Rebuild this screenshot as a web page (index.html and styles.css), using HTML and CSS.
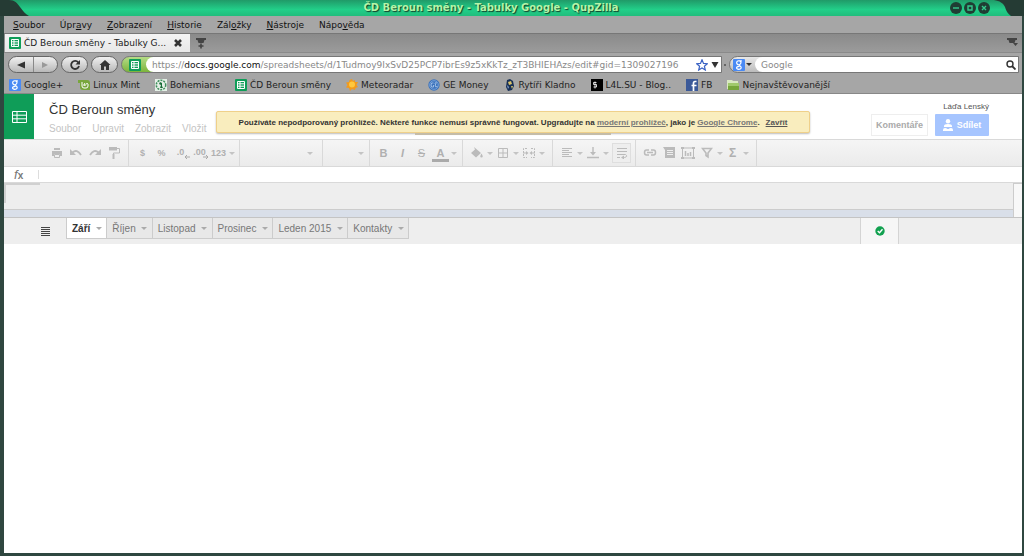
FILE: index.html
```html
<!DOCTYPE html>
<html lang="cs">
<head>
<meta charset="utf-8">
<title>ČD Beroun směny - Tabulky Google - QupZilla</title>
<link rel="stylesheet" href="styles.css">
</head>
<body>
<svg class="defs" width="0" height="0" aria-hidden="true">
  <symbol id="sheet" viewBox="0 0 12 12"><rect width="12" height="12" rx="1" fill="#0f9d58"/><path d="M2.5 2.5h7v7h-7zM2.5 4.8h7M2.5 7.2h7M5 2.5v7" fill="none" stroke="#fff"/></symbol>
  <symbol id="g8" viewBox="0 0 12 12"><rect width="12" height="12" rx="1" fill="#4a8af4"/><path d="M8.8 1.8H6a2 2 0 1 0 .8 3.6M7 2c1.600 1 1 2.600 0 3.300-1.200.8-.6 1.300.4 1.900 1.600 1.200.6 3.100-1.500 3.100-3.300 0-3.200-2.800.6-3" fill="none" stroke="#fff" stroke-width="1.200"/></symbol>
</svg>
<div class="window">
  <header class="titlebar">
    <h1>ČD Beroun směny - Tabulky Google - QupZilla</h1>
    <div class="winbtns">
      <button aria-label="Minimalizovat"><svg viewBox="0 0 12 12"><circle cx="6" cy="6" r="6"/><path d="M3 6h6"/></svg></button>
      <button aria-label="Maximalizovat"><svg viewBox="0 0 12 12"><circle cx="6" cy="6" r="6"/><path d="M4 4h4v4H4z"/></svg></button>
      <button aria-label="Zavřít okno"><svg viewBox="0 0 12 12"><circle cx="6" cy="6" r="6"/><path d="M4 4l4 4M8 4l-4 4"/></svg></button>
    </div>
    <svg class="corner left" viewBox="0 0 30 16"><path d="M0 0h9c6 0 8 3 11 7 3 4 5 7 9 9H0z"/></svg>
    <svg class="corner right" viewBox="0 0 30 16"><path d="M30 0H0c6 1 9 3 11 7 1 4 3 7 6 9h13z"/></svg>
  </header>
  <div class="chrome">
    <nav class="menubar">
      <button><u>S</u>oubor</button><button>Úpr<u>a</u>vy</button><button><u>Z</u>obrazení</button><button><u>H</u>istorie</button><button>Zál<u>o</u>žky</button><button><u>N</u>ástroje</button><button>Nápo<u>v</u>ěda</button>
    </nav>
    <div class="tabbar">
      <div class="tab"><svg class="fav"><use href="#sheet"/></svg><span>ČD Beroun směny - Tabulky G...</span><button aria-label="Zavřít panel"><svg viewBox="0 0 10 10"><path d="M2 2l6 6M8 2l-6 6" stroke="#333" stroke-width="2.600"/></svg></button></div>
      <button class="newtab" aria-label="Nový panel"><svg viewBox="0 0 12 12"><path d="M1 1h10v2H9.500l-1 3h-5l-1-3H1z" fill="#444"/><path d="M3.500 9h5M6 6.500v5" stroke="#444" stroke-width="1.600"/></svg></button>
      <button class="tablist" aria-label="Seznam panelů"><svg viewBox="0 0 12 12"><path d="M1 1h10v2H9.500l-1 3h-5l-1-3H1zM7 6h5L9.500 9z" fill="#444"/></svg></button>
    </div>
    <div class="navbar">
      <div class="pair"><button aria-label="Zpět"><svg viewBox="0 0 10 10"><path d="M9 1.500v7L1 5z" fill="#333"/></svg></button><button aria-label="Vpřed"><svg viewBox="0 0 10 10"><path d="M2 2v6l6-3z" fill="#999"/></svg></button></div>
      <button class="pill" aria-label="Obnovit"><svg viewBox="0 0 12 12"><path d="M9.300 3.500A4 4 0 1 0 10 7" fill="none" stroke="#333" stroke-width="1.800"/><path d="M11 1v4.500H6.500z" fill="#333"/></svg></button>
      <button class="pill" aria-label="Domů"><svg viewBox="0 0 12 12"><path d="M6 1l5.500 5H10v5H7V7.500H5V11H2V6H.5z" fill="#333"/></svg></button>
      <div class="urlbar">
        <div class="site"><svg class="fav"><use href="#sheet"/></svg></div>
        <div class="address" role="textbox" aria-label="Adresa" contenteditable="true" spellcheck="false">https://<b>docs.google.com</b>/spreadsheets/d/1Tudmoy9IxSvD25PCP7ibrEs9z5xKkTz_zT3BHIEHAzs/edit#gid=1309027196</div>
        <button class="star" aria-label="Záložka"><svg viewBox="0 0 12 12"><path d="M6 .8l1.500 3.600 3.800.3-2.900 2.500.9 3.800L6 9l-3.300 2 .9-3.800L.7 4.700l3.800-.3z" fill="#fff" stroke="#3a62c4" stroke-width="1.200"/></svg></button>
        <button class="drop" aria-label="Historie adres"><svg viewBox="0 0 8 8"><path d="M0 1h8L4 8z" fill="#333"/></svg></button>
      </div>
      <span class="grip"></span>
      <div class="search">
        <button class="engine" aria-label="Vyhledávač"><svg class="fav"><use href="#g8"/></svg><i class="caret dark"></i></button>
        <input type="text" placeholder="Google" aria-label="Hledat">
        <button class="go" aria-label="Hledat"><svg viewBox="0 0 10 10"><circle cx="4" cy="4" r="3" fill="none" stroke="#333" stroke-width="1.400"/><path d="M6 6l3.500 3.500" stroke="#333" stroke-width="1.800"/></svg></button>
      </div>
    </div>
    <nav class="bookmarks">
      <a href="#"><svg><use href="#g8"/></svg>Google+</a>
      <a href="#"><svg viewBox="0 0 12 12"><path d="M0 1h9q3 0 3 3v7H5Q2 11 2 8V4H0z" fill="#78a63c"/><path d="M4 3v4q0 2 2 2h2q2 0 2-2V5M6 7V5q1-1 1 0v2M8 5q2-1 2 0" fill="none" stroke="#fff"/></svg>Linux Mint</a>
      <a href="#"><svg viewBox="0 0 12 12"><rect width="12" height="12" fill="#e4efe6"/><circle cx="6" cy="6" r="4.700" fill="none" stroke="#3e8e5c" stroke-width="1.500" stroke-dasharray="2 1"/><path d="M5 3l2 1v3l1 2H5l1-3-2-1z" fill="#176c37"/></svg>Bohemians</a>
      <a href="#"><svg><use href="#sheet"/></svg>ČD Beroun směny</a>
      <a href="#"><svg viewBox="0 0 12 12"><path d="M6 0l1 2 2-1v2l3 0-1.500 3L12 8l-2.500 1L9 11l-3-1-2 2-1-3-3-.5L1.500 6 0 3.500l3-.5L3.500 1z" fill="#f39a1c"/><circle cx="6" cy="5.500" r="3" fill="#ffc83d"/></svg>Meteoradar</a>
      <a href="#"><svg viewBox="0 0 12 12"><circle cx="6" cy="6" r="5.700" fill="#3c73bd"/><circle cx="6" cy="6" r="4.300" fill="none" stroke="#8db1df" stroke-width=".7"/><path d="M5.500 4Q3 3 3 6t2.500 2V6M9 4Q6.500 3 7 5l1 1-1 .5q0 2 2.500 1" fill="none" stroke="#a5c3e8" stroke-width=".9"/></svg>GE Money</a>
      <a href="#"><svg viewBox="0 0 12 12"><path d="M3 1l3-1 3 2 1 5-2 4-4 1-2-4z" fill="#172f55"/><path d="M4 3l3-1 1 3-3 1zM7 7l2 0-1 3z" fill="#d7c169"/><path d="M3 6l2 2-1 2z" fill="#8ba9d6"/></svg>Rytíři Kladno</a>
      <a href="#"><svg viewBox="0 0 12 12"><rect width="12" height="12" fill="#000"/><path d="M5.500 3.500h-3v2h3v2.500h-3M4 2.500v7" fill="none" stroke="#fff" stroke-width=".8"/></svg>L4L.SU - Blog..</a>
      <a href="#"><svg viewBox="0 0 12 12"><rect width="12" height="12" fill="#3b5998"/><path d="M10.500 2.500H9q-1.500 0-1.500 2V12M5.500 6.500h5" fill="none" stroke="#fff" stroke-width="1.700"/></svg>FB</a>
      <a href="#"><svg viewBox="0 0 12 12"><path d="M0 1h5l1 1h5v8H0z" fill="#d9e8c2"/><path d="M1 4h11v7H1z" fill="#76a63b"/><path d="M1 4h11v3H1z" fill="#a0c96c"/></svg>Nejnavštěvovanější</a>
    </nav>
  </div>
  <main class="docs">
    <div class="dochead">
      <a class="logo" href="#" aria-label="Tabulky"><svg viewBox="0 0 15 12"><path d="M.5.5h14v11H.5zM.5 4.200h14M.5 7.800h14M5 .5v11" fill="none" stroke="#fff"/></svg></a>
      <div class="doctitle">
        <h2>ČD Beroun směny</h2>
        <nav><button>Soubor</button><button>Upravit</button><button>Zobrazit</button><button>Vložit</button></nav>
      </div>
      <div class="account">
        <span>Láďa Lenský</span>
        <div><button class="comment">Komentáře</button><button class="share"><svg viewBox="0 0 10 12"><circle cx="5" cy="2.300" r="2.200"/><path d="M1 7q0-2 4-2t4 2v1H1zM0 11q0-2 2-2t2 1h2q0-1 2-1t2 2v1H0z"/></svg>Sdílet</button></div>
      </div>
      <div class="notice" role="alert">Používáte nepodporovaný prohlížeč. Některé funkce nemusí správně fungovat. Upgradujte na <a href="#">moderní prohlížeč</a>, jako je <a href="#">Google Chrome</a>.<a class="close" href="#">Zavřít</a></div>
    </div>
    <div class="toolbar">
      <div class="group first">
        <button aria-label="Tisk"><svg viewBox="0 0 12 12"><path d="M3 1h6v2H3zM1 4h10v5H9V7H3v2H1z" fill="#bbb"/><path d="M3.500 7.500h5v3h-5z" fill="none" stroke="#bbb"/></svg></button>
        <button aria-label="Zpět"><svg viewBox="0 0 12 12"><path d="M2.500 5.500Q7 1.500 11 8" fill="none" stroke="#bbb" stroke-width="1.800"/><path d="M0 2v6h6z" fill="#bbb"/></svg></button>
        <button aria-label="Znovu"><svg viewBox="0 0 12 12"><path d="M9.500 5.500Q5 1.500 1 8" fill="none" stroke="#bbb" stroke-width="1.800"/><path d="M12 2v6H6z" fill="#bbb"/></svg></button>
        <button aria-label="Kopírovat formát"><svg viewBox="0 0 12 12"><path d="M1 0h8v3.500H1zM4.500 7h2v5h-2z" fill="#bbb"/><path d="M9 1.500h2.500V6h-6v2" fill="none" stroke="#bbb"/></svg></button>
      </div>
      <div class="group numbers">
        <button>$</button><button>%</button>
        <button class="dec" aria-label="Méně desetinných míst">.0<svg viewBox="0 0 6 4"><path d="M1 2h5M3 0L1 2l2 2" fill="none" stroke="#aaa"/></svg></button>
        <button class="dec" aria-label="Více desetinných míst">.00<svg viewBox="0 0 6 4"><path d="M0 2h5M3 0l2 2-2 2" fill="none" stroke="#aaa"/></svg></button>
        <button>123</button><i class="caret"></i>
      </div>
      <div class="group font"><i class="caret"></i></div>
      <div class="group size"><i class="caret"></i></div>
      <div class="group style">
        <button class="big">B</button><button class="big"><em>I</em></button><button class="big strike"><s>S</s></button><button class="big color">A</button><i class="caret"></i>
      </div>
      <div class="group cells">
        <button aria-label="Barva výplně"><svg viewBox="0 0 12 12"><path d="M3 0l7 6-5 4.500L0 6l4-3.500zM10.500 6.500q2.500 4 0 4t0-4z" fill="#bbb"/></svg></button><i class="caret"></i>
        <button aria-label="Ohraničení"><svg viewBox="0 0 12 12"><path d="M1.500 1.500h9v9h-9zM6 1.500v9M1.500 6h9" fill="none" stroke="#bbb"/></svg></button><i class="caret"></i>
        <button aria-label="Sloučit"><svg class="wide" viewBox="0 0 14 12"><path d="M5 1.500H1.500v9H5M9 1.500h3.500v9H9" fill="none" stroke="#bbb" stroke-dasharray="2 1"/><path d="M1 6h4M9 6h4" stroke="#bbb"/><path d="M4 4l2.500 2L4 8zM10 4L7.500 6 10 8z" fill="#bbb"/></svg></button><i class="caret"></i>
      </div>
      <div class="group align">
        <button aria-label="Vodorovně"><svg viewBox="0 0 12 12"><path d="M1 1.500h10M1 3.500h7M1 5.500h10M1 7.500h7M1 9.500h10" stroke="#bbb"/></svg></button><i class="caret"></i>
        <button aria-label="Svisle"><svg viewBox="0 0 12 12"><path d="M6 0v7M0 10.500h12" stroke="#bbb" stroke-width="1.400"/><path d="M3 5h6L6 8.500z" fill="#bbb"/></svg></button><i class="caret"></i>
        <button class="on" aria-label="Zalamovat text"><svg viewBox="0 0 12 12"><path d="M1 1.500h10M1 4.500h10M1 7.500h8.500q3 2-1 3H7M1 10.500h3" fill="none" stroke="#bbb"/><path d="M8 8.500v4L5 10.500z" fill="#bbb"/></svg></button>
      </div>
      <div class="group insert">
        <button aria-label="Odkaz"><svg class="wide" viewBox="0 0 14 12"><path d="M6 3H3.500q-2 0-2 2.500t2 2.500H6M8 3h2.500q2 0 2 2.500t-2 2.500H8M4 5.500h6" fill="none" stroke="#bbb" stroke-width="1.500"/></svg></button>
        <button aria-label="Komentář"><svg viewBox="0 0 12 12"><path d="M0 0h12v11H2V3z" fill="#bbb"/><path d="M4 3.500h6M4 5.500h6M4 7.500h6" stroke="#eee"/></svg></button>
        <button aria-label="Graf"><svg class="wide" viewBox="0 0 14 12"><path d="M1.500 1h11v10h-11z" fill="none" stroke="#bbb"/><path d="M4.500 9V4M7 9V6M9.500 9V5" stroke="#bbb" stroke-width="1.500"/><path d="M0 0h3v2H0zM11 0h3v2h-3zM0 10h3v2H0zM11 10h3v2h-3z" fill="#bbb"/></svg></button>
        <button aria-label="Filtr"><svg viewBox="0 0 12 12"><path d="M1.500 1.500h9L7 6v4L5 8.500V6z" fill="none" stroke="#bbb" stroke-width="1.600"/></svg></button><i class="caret"></i>
        <button class="sum">Σ</button><i class="caret"></i>
      </div>
    </div>
    <div class="formula"><label for="fx"><em>f</em>x</label><input id="fx" type="text"></div>
    <div class="grid"><div class="canvas"></div><div class="hscroll"></div><div class="vscroll"></div></div>
    <div class="sheets">
      <button class="all" aria-label="Všechny listy"><svg viewBox="0 0 9 9"><path d="M0 .5h9M0 2.500h9M0 4.500h9M0 6.500h9M0 8.500h9" stroke="#444"/></svg></button>
      <div class="list"><button class="active">Září<i class="caret"></i></button><button>Říjen<i class="caret"></i></button><button>Listopad<i class="caret"></i></button><button>Prosinec<i class="caret"></i></button><button>Leden 2015<i class="caret"></i></button><button>Kontakty<i class="caret"></i></button></div>
      <div class="status"><svg viewBox="0 0 10 10"><circle cx="5" cy="5" r="4.700" fill="#12a150"/><path d="M2.700 5l1.800 1.700 3-3.400" fill="none" stroke="#fff" stroke-width="1.400"/></svg></div>
    </div>
  </main>
</div>
</body>
</html>
```
FILE: styles.css
```css
* { box-sizing: border-box; }
body { margin: 0; background: #2b423b; font: 9px "DejaVu Sans", sans-serif; color: #222; }
button { padding: 0; border: 0; background: none; font: inherit; color: inherit; display: flex; align-items: center; justify-content: center; }
a { color: inherit; text-decoration: none; }
h1, h2 { margin: 0; }
svg { display: block; flex: none; }
.defs { position: absolute; }
.fav { width: 12px; height: 12px; }
.window { min-height: 100vh; display: flex; flex-direction: column; border: solid #2f4740; border-width: 0 2px 3px 4px; }

.titlebar { position: relative; height: 16px; display: flex; align-items: center; justify-content: center; background: linear-gradient(#209a68, #22cf89 60%, #20bd7c); margin: 0 -2px 0 -4px; padding-right: 42px; }
.titlebar h1 { font-size: 10px; line-height: 16px; color: #b4f5a8; text-shadow: 1px 1px 1px #123e2b; }
.winbtns { position: absolute; right: 34px; top: 2px; display: flex; gap: 2px; z-index: 1; }
.winbtns svg { width: 12px; height: 12px; fill: #1f3d33; stroke: none; }
.winbtns path { fill: none; stroke: #35c98d; stroke-width: 1.4; }
.corner { position: absolute; top: 0; width: 30px; height: 16px; fill: #253b34; }
.corner.left { left: 0; }
.corner.right { right: 0; }

.chrome { background: #a6a6a6; border-bottom: 1px solid #888; }
.menubar { height: 17px; display: flex; gap: 15px; padding-left: 9px; color: #111; }
.menubar button { display: block; }
.tabbar { height: 20px; display: flex; align-items: center; background: linear-gradient(#8a8a8a, #9b9b9b); border-top: 1px solid #777; border-bottom: 1px solid #8a8a8a; padding: 0 4px 0 1px; }
.tab { align-self: stretch; width: 185px; display: flex; align-items: center; gap: 3px; padding: 0 7px 0 4px; background: linear-gradient(#f4f4f4, #e8e8e8); white-space: nowrap; }
.tab span { flex: 1; }
.tab button svg { width: 10px; height: 10px; }
.newtab { margin-left: 5px; }
.tablist { margin-left: auto; }
.newtab svg, .tablist svg { width: 12px; height: 12px; }
.navbar { height: 23px; display: flex; align-items: center; padding: 0 3px 0 4px; }
.pair, .pill { height: 17px; border: 1px solid #666; border-radius: 9px; background: linear-gradient(#f0f0f0, #b8b8b8); }
.pair { width: 50px; display: flex; overflow: hidden; }
.pair button { flex: 1; }
.pair button + button { border-left: 1px solid #888; }
.pair svg { width: 10px; height: 10px; }
.pill { width: 27px; margin-left: 3px; }
.pill svg { width: 12px; height: 12px; }
.urlbar { flex: 1; height: 17px; margin-left: 3px; display: flex; align-items: center; border: 1px solid #777; border-radius: 9px 0 0 9px; background: linear-gradient(#b5dc86, #7cb43c); min-width: 0; }
.site { width: 24px; display: flex; justify-content: center; padding-left: 2px; }
.address { flex: 1; height: 15px; line-height: 16px; padding-left: 6px; border-radius: 9px 0 0 9px; background: #fff; color: #888; white-space: nowrap; overflow: hidden; }
.address b { font-weight: 400; color: #111; }
.star, .drop { height: 15px; background: #fff; }
.star { width: 14px; }
.drop { width: 12px; }
.star svg { width: 12px; height: 12px; }
.drop svg { width: 8px; height: 7px; }
.grip { width: 2px; height: 2px; margin: 0 3px 0 2px; background: #666; }
.search { width: 290px; height: 17px; display: flex; border: 1px solid #777; border-radius: 9px 0 0 9px; background: linear-gradient(#e8e8e8, #bbb); }
.engine { width: 25px; gap: 1px; }
.search input { flex: 1; min-width: 0; border: 0; border-radius: 9px 0 0 9px; padding: 0 0 0 6px; font: inherit; background: #fff; }
.search input::placeholder { color: #888; opacity: 1; }
.go { width: 14px; background: #fff; }
.go svg { width: 10px; height: 10px; }
.bookmarks { height: 17px; display: flex; gap: 15px; padding-left: 5px; white-space: nowrap; }
.bookmarks a { display: flex; align-items: center; gap: 3px; }
.bookmarks svg { width: 12px; height: 12px; }

.caret { flex: none; width: 7px; display: flex; justify-content: center; }
.caret::before { content: ""; border: solid transparent; border-width: 3px 3px 0; border-top-color: #c4c4c4; }
.caret.dark::before { border-top-color: #333; }

.docs { flex: 1; background: #fff; font-family: "Liberation Sans", Arial, sans-serif; }
.dochead { position: relative; display: flex; height: 45px; }
.logo { width: 30px; background: #0f9d58; display: flex; align-items: center; justify-content: center; }
.logo svg { width: 15px; height: 12px; }
.doctitle { padding: 7px 0 0 15px; }
.doctitle h2 { font-size: 13px; font-weight: 400; line-height: 18px; color: #333; }
.doctitle nav { display: flex; gap: 11px; font-size: 10px; line-height: 19px; color: #c4c4c4; }
.account { margin-left: auto; padding: 7px 33px 0 0; display: flex; flex-direction: column; align-items: flex-end; font-size: 8px; color: #555; gap: 2px; line-height: 11px; }
.account div { display: flex; gap: 7px; font-size: 9px; font-weight: 700; }
.comment { width: 57px; height: 22px; border: 1px solid #eee; color: #aaa; }
.share { width: 54px; height: 22px; border-radius: 1px; background: #a6c5ff; color: #fff; gap: 4px; }
.share svg { width: 10px; height: 12px; fill: #fff; }
.notice { position: absolute; top: 17px; left: 212px; min-width: 594px; height: 22px; line-height: 21px; padding: 0 12px; border: 1px solid #efd08a; border-radius: 2px; background: #f9edbe; color: #333; font-size: 8px; font-weight: 700; text-align: center; white-space: nowrap; box-shadow: 0 1px 2px #bbb; }
.notice::after { content: ""; position: absolute; top: 21px; left: 198px; width: 196px; height: 2px; background: #c4bca8; }
.notice a { color: #777; text-decoration: underline; }
.notice .close { margin-left: 6px; color: #555; }

.toolbar { height: 28px; display: flex; background: linear-gradient(#f5f5f5, #ebebeb); border: solid #d9d9d9; border-width: 1px 0; color: #b0b0b0; font-size: 9px; font-weight: 700; }
.group { display: flex; align-items: center; border-right: 1px solid #d9d9d9; padding: 0 4px; }
.group button { width: 19px; height: 20px; }
.group svg { width: 12px; height: 12px; }
.group svg.wide { width: 14px; }
.first { padding: 0 5px 0 43px; }
.font, .size { justify-content: flex-end; padding-right: 9px; }
.font { width: 83px; }
.size { width: 47px; padding-right: 5px; }
.style { padding-right: 5px; }
.cells, .insert { padding-right: 7px; }
.group .dec { flex-direction: column; align-items: center; }
.group .dec svg { width: 6px; height: 4px; align-self: flex-end; margin-top: -2px; }
.group .big { font-size: 11px; }
.group .strike { font-weight: 400; }
.group .color { width: 17px; height: 16px; border-bottom: 3px solid #aaa; margin: 2px 1px 0; }
.group .on { margin-left: 3px; border: 1px solid #dedede; background: #eee; }
.group .sum { font-size: 12px; }
.formula { height: 16px; display: flex; align-items: center; border-bottom: 1px solid #d9d9d9; }
.formula label { width: 34px; padding-left: 10px; color: #777; font: 700 10px/15px "Liberation Sans", sans-serif; }
.formula em { font: italic 13px/15px "Liberation Sans", sans-serif; }
.formula input { flex: 1; height: 9px; padding: 0 4px; border: 0; border-left: 1px solid #ddd; outline: 0; font: inherit; }
.grid { display: grid; grid-template: 26px 8px / 1fr 9px; }
.canvas { background: #eee; }
.canvas::before { content: ""; display: block; width: 34px; height: 18px; border: solid #d0d0d0; border-width: 2px 0 0 2px; }
.hscroll { grid-row: 2; background: #d9dfe9; border-top: 1px solid #ccc; }
.vscroll { grid-column: 2; grid-row: 1 / 3; background: #f8f8f8; border: solid #ccc; border-width: 1px 0 0 1px; }
.sheets { height: 27px; display: flex; background: #eee; border-top: 1px solid #c4c4c4; }
.all { margin: 0 12px 0 37px; width: 9px; }
.all svg { width: 9px; height: 9px; }
.list { display: flex; margin-left: 4px; height: 21px; font-size: 10px; color: #777; }
.list button { padding: 0 4px 0 5px; gap: 5px; background: #e8e8e8; border: solid #ccc; border-width: 0 1px 1px 0; }
.list .active { background: #fff; color: #333; font-weight: 700; border-left-width: 1px; }
.list .caret::before { border-top-color: #aaa; }
.status { width: 39px; margin: 0 123px 0 auto; display: flex; align-items: center; justify-content: center; background: #f6f6f6; border: solid #d4d4d4; border-width: 0 1px; }
.status svg { width: 10px; height: 10px; }
```
